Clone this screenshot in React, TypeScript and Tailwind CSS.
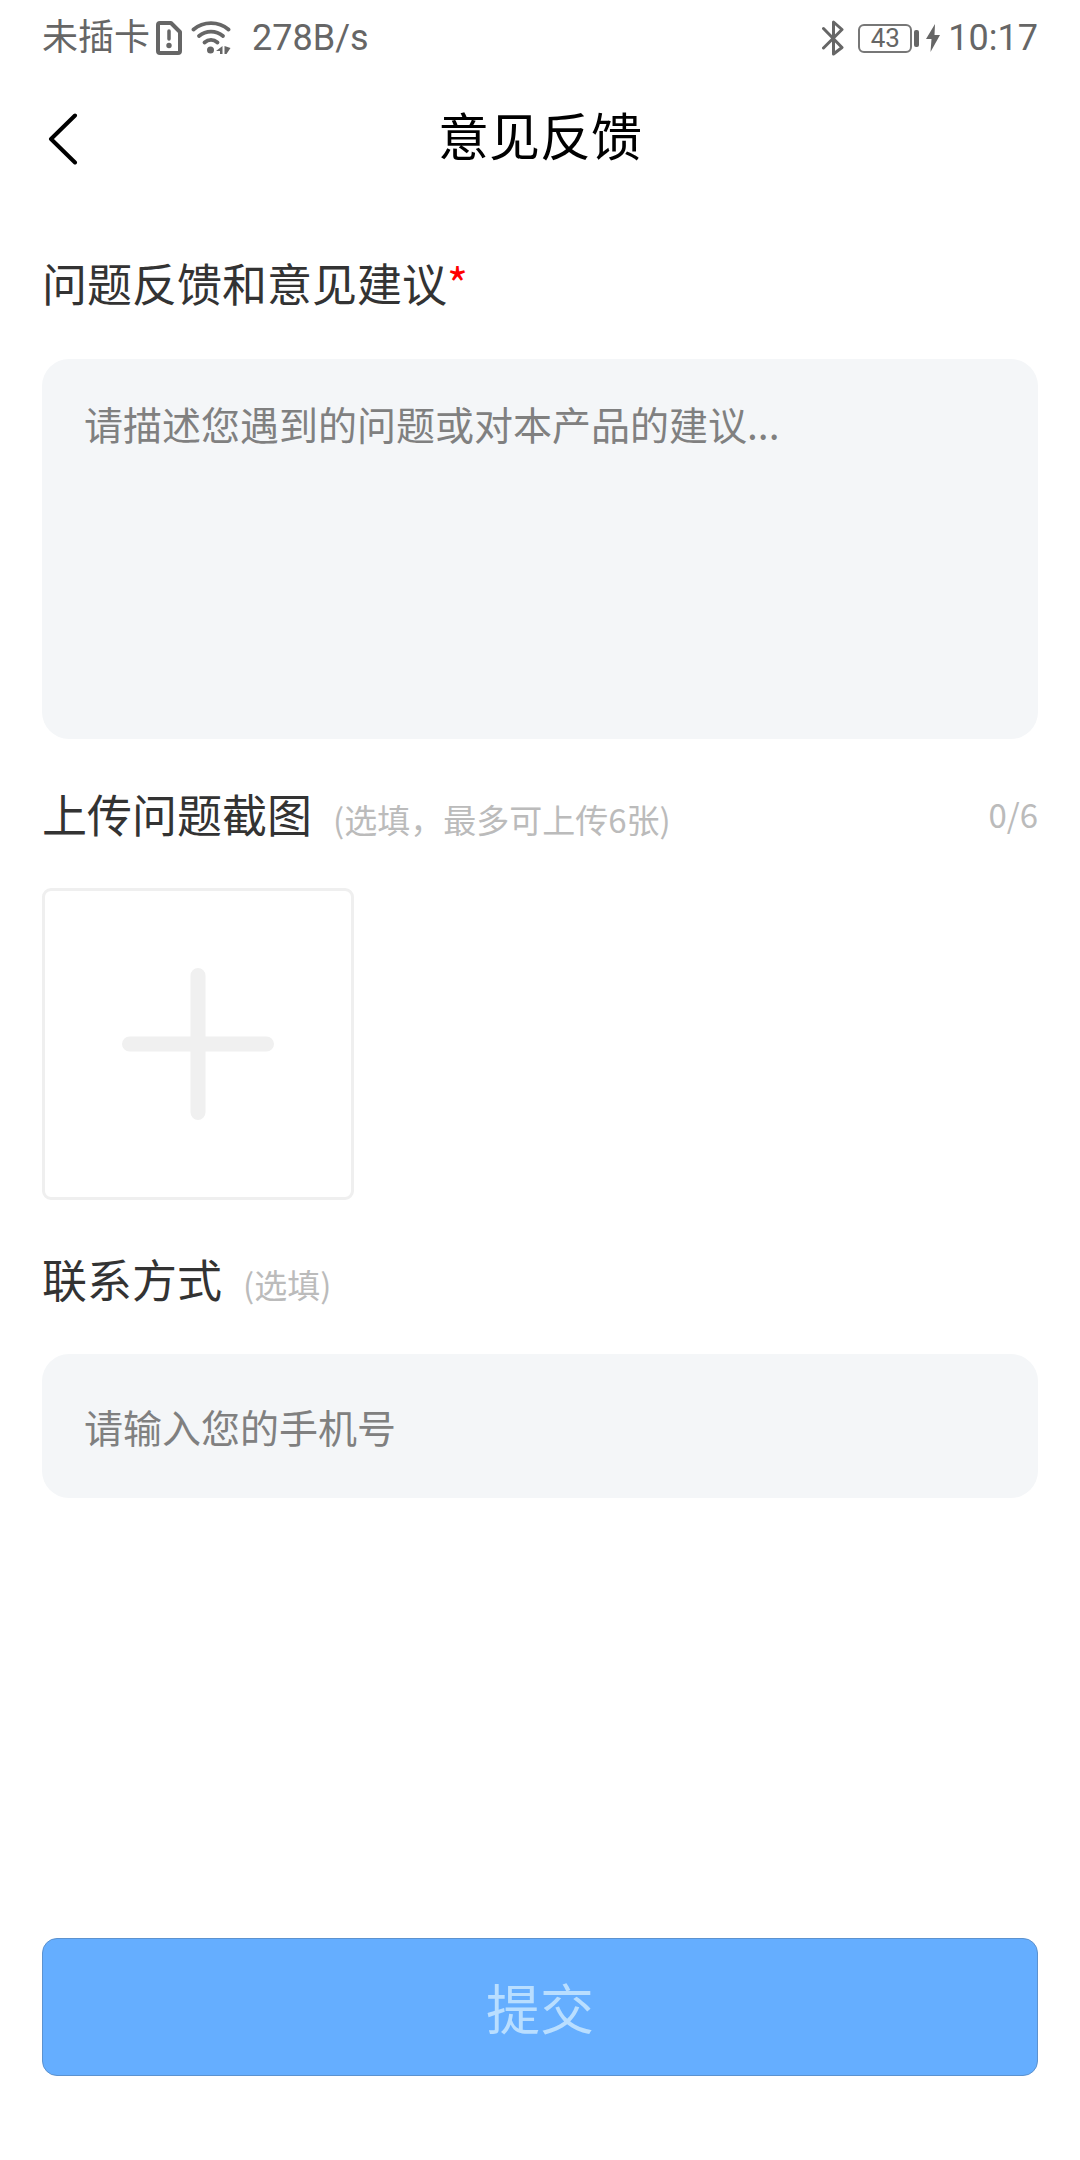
import { useState } from 'react';

function StatusBar() {
  return (
    <div className="flex h-[76px] items-center justify-between px-[42px] text-4xl text-[#666666]">
      <div className="flex items-center">
        <span>未插卡</span>
        <svg className="ml-[6px] h-[34px] w-[26px]" viewBox="0 0 26 34" fill="none" aria-hidden="true">
          <path
            d="M4 2h11l9 9v19a2 2 0 0 1-2 2H4a2 2 0 0 1-2-2V4a2 2 0 0 1 2-2Z"
            stroke="currentColor"
            strokeWidth="4"
            strokeLinejoin="round"
          />
          <path d="M13 10v8" stroke="currentColor" strokeWidth="3.500" strokeLinecap="round" />
          <circle cx="13" cy="24.500" r="2.700" fill="currentColor" />
        </svg>
        <svg className="ml-[9px] h-[34px] w-[41px]" viewBox="0 0 41 34" fill="none" aria-hidden="true">
          <g stroke="currentColor" strokeWidth="3.800" strokeLinecap="round">
            <path d="M2.500 8.500C12.500 0 27.500 0 37.500 8.500" />
            <path d="M8 15c7-5.800 17-5.800 24 0" />
            <path d="M13.500 21.500c4-3.500 9-3.500 13 0" />
          </g>
          <circle cx="19.500" cy="29" r="3.500" fill="currentColor" />
          <path d="M31.500 25v8h-2.500v-3H25zM33.500 25l6 2-4 6h-2z" fill="currentColor" />
        </svg>
        <span className="ml-5">278B/s</span>
      </div>

      <div className="flex items-center">
        <svg className="h-[36px] w-[22px]" viewBox="0 0 22 36" fill="none" aria-hidden="true">
          <path
            d="M1.500 8.500 20 27.500 11.500 34V2L20 9.500 1.500 28"
            stroke="currentColor"
            strokeWidth="3"
            strokeLinecap="round"
            strokeLinejoin="round"
          />
        </svg>
        <div className="ml-[14px] flex h-[29px] w-[54px] items-center justify-center rounded-[6px] border-2 border-[#777777] text-[26px] leading-none">
          43
        </div>
        <div className="ml-[2px] h-[17px] w-[5px] rounded-[2px] bg-[#666666]" />
        <svg className="ml-[7px] h-[28px] w-[14px]" viewBox="0 0 14 28" fill="currentColor" aria-hidden="true">
          <path d="M9 0 0 15h5.500L4.500 28 14 11H8.500z" />
        </svg>
        <span className="ml-[8px]">10:17</span>
      </div>
    </div>
  );
}

export default function App() {
  const [description, setDescription] = useState('');
  const [phone, setPhone] = useState('');

  return (
    <div className="flex min-h-screen flex-col bg-white font-[Roboto,'Noto_Sans_CJK_SC',sans-serif]">
      <StatusBar />

      <header className="grid h-[126px] grid-cols-[1fr_auto_1fr] items-center px-[42px]">
        <button type="button" aria-label="返回" className="w-[48px] pl-[6px]">
          <svg className="h-[52px] w-[30px]" viewBox="0 0 30 52" fill="none">
            <path d="M27 2.500 3 26l24 23.500" stroke="#000000" strokeWidth="4" strokeLinecap="round" strokeLinejoin="round" />
          </svg>
        </button>
        <h1 className="text-[51px] leading-[60px] text-black">意见反馈</h1>
      </header>

      <form
        className="flex flex-1 flex-col px-[42px] pt-[51px] pb-[84px] font-['Noto_Sans_CJK_SC',sans-serif] text-[#333333]"
        onSubmit={(e) => e.preventDefault()}
      >
        {/* 问题描述 */}
        <label htmlFor="description" className="text-[45px] leading-[60px]">
          问题反馈和意见建议<span className="text-[#ff0000]">*</span>
        </label>
        <textarea
          id="description"
          value={description}
          onChange={(e) => setDescription(e.target.value)}
          placeholder="请描述您遇到的问题或对本产品的建议..."
          className="mt-[46px] h-[380px] resize-none rounded-[27px] bg-[#f4f6f8] px-[42px] py-[34px] text-[39px] leading-[60px] outline-none placeholder:text-[#808080]"
        />

        {/* 截图上传 */}
        <div className="mt-[45px] flex items-start justify-between leading-[60px]">
          <h2 className="flex items-baseline gap-[21px]">
            <span className="text-[45px]">上传问题截图</span>
            <span className="text-[33px] text-[#bbbbbb]">(选填，最多可上传6张)</span>
          </h2>
          <span className="text-[33px] text-[#bbbbbb]">0/6</span>
        </div>
        <button
          type="button"
          aria-label="添加截图"
          className="mt-[39px] flex size-[312px] items-center justify-center rounded-[9px] border-3 border-[#efefef]"
        >
          <svg className="size-[152px]" viewBox="0 0 152 152" fill="none">
            <path d="M76 7.500v137M7.500 76h137" stroke="#f0f0f0" strokeWidth="15" strokeLinecap="round" />
          </svg>
        </button>

        {/* 联系方式 */}
        <label htmlFor="phone" className="mt-[49px] flex items-baseline gap-[21px] leading-[60px]">
          <span className="text-[45px]">联系方式</span>
          <span className="text-[33px] text-[#bbbbbb]">(选填)</span>
        </label>
        <input
          id="phone"
          type="tel"
          value={phone}
          onChange={(e) => setPhone(e.target.value)}
          placeholder="请输入您的手机号"
          className="mt-10 h-[144px] rounded-[27px] bg-[#f4f6f8] px-[42px] text-[39px] outline-none placeholder:text-[#808080]"
        />

        <button
          type="submit"
          className="mt-auto h-[138px] rounded-[15px] border border-[#5c92cf] bg-[#65aeff] text-[54px] leading-[60px] text-[#b9deff]"
        >
          提交
        </button>
      </form>
    </div>
  );
}
